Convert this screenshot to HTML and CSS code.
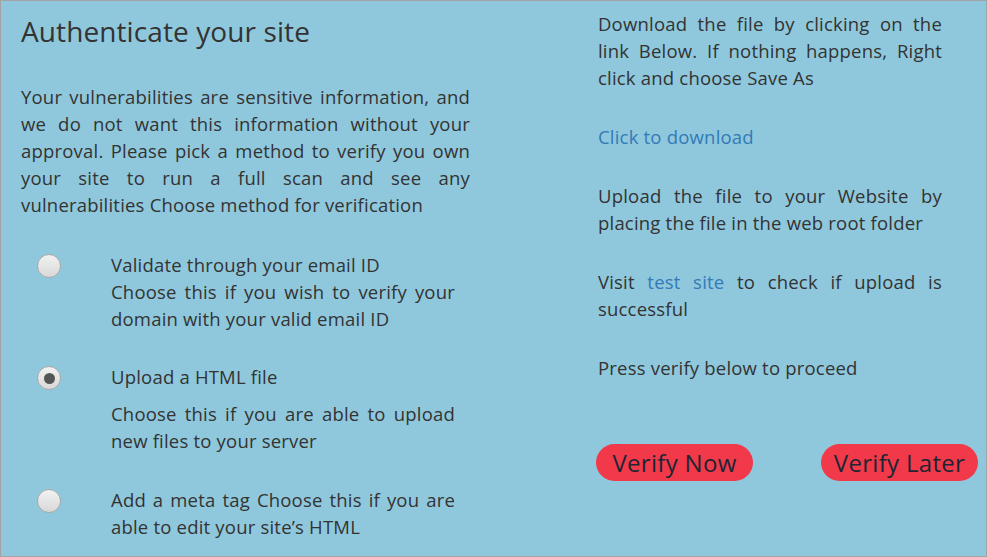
FILE: index.html
```html
<!DOCTYPE html>
<html lang="en">
<head>
    <meta charset="UTF-8">
    <meta name="viewport" content="width=device-width, initial-scale=1.0">
    <title>Authenticate your site</title>
    <link rel="stylesheet" href="styles.css">
</head>
<body>
    <div class="page">
        <div class="left">
            <h1>Authenticate your site</h1>
            <p class="intro">Your vulnerabilities are sensitive information, and we do not want this information without your approval. Please pick a method to verify you own your site to run a full scan and see any vulnerabilities Choose method for verification</p>

            <div class="option first">
                <span class="radio"></span>
                <div class="option-text">
                    <p>Validate through your email ID<br>Choose this if you wish to verify your domain with your valid email ID</p>
                </div>
            </div>

            <div class="option second">
                <span class="radio checked"></span>
                <div class="option-text">
                    <p>Upload a HTML file</p>
                    <p class="sub">Choose this if you are able to upload new files to your server</p>
                </div>
            </div>

            <div class="option">
                <span class="radio"></span>
                <div class="option-text">
                    <p>Add a meta tag Choose this if you are able to edit your site’s HTML</p>
                </div>
            </div>
        </div>

        <div class="right">
            <p>Download the file by clicking on the link Below. If nothing happens, Right click and choose Save As</p>
            <p><a href="#">Click to download</a></p>
            <p>Upload the file to your Website by placing the file in the web root folder</p>
            <p>Visit <a href="#">test site</a> to check if upload is successful</p>
            <p>Press verify below to proceed</p>
            <div class="buttons">
                <button type="button">Verify Now</button>
                <button type="button">Verify Later</button>
            </div>
        </div>
    </div>
</body>
</html>
```

FILE: styles.css
```css
* {
    margin: 0;
    padding: 0;
    box-sizing: border-box;
}

body {
    font-family: "Open Sans", "DejaVu Sans", sans-serif;
    font-size: 18.5px;
    letter-spacing: 0.2px;
    line-height: 27px;
    color: #333;
    background-color: #8fc8dc;
    border: 1px solid #a3a3a3;
    height: 100vh;
    overflow: hidden;
}

.page {
    display: flex;
}

p {
    text-align: justify;
}

a {
    color: #337ab7;
    text-decoration: none;
}

.left {
    width: 449px;
    margin-left: 20px;
    padding-top: 11px;
}

h1 {
    font-size: 28px;
    font-weight: normal;
    letter-spacing: 0.1px;
    line-height: 38px;
    color: #333;
}

.intro {
    margin-top: 33px;
}

.option {
    display: flex;
    margin-top: 32px;
}

.option.first {
    margin-top: 33px;
}

.option.second {
    margin-top: 31px;
}

.radio {
    flex: none;
    width: 24px;
    height: 24px;
    margin: 3px 50px 0 16px;
    border-radius: 50%;
    border: 1px solid #a9a9a9;
    background: linear-gradient(#f2f2f2, #d8d8d8);
    display: flex;
    justify-content: center;
    align-items: center;
}

.radio.checked::after {
    content: "";
    width: 11px;
    height: 11px;
    border-radius: 50%;
    background-color: #555;
}

.option-text {
    width: 344px;
}

.option-text .sub {
    margin-top: 10px;
}

.right {
    width: 344px;
    margin-left: 128px;
    padding-top: 9px;
}

.right p {
    margin-bottom: 32px;
}

.buttons {
    display: flex;
    gap: 68px;
    margin-left: -2px;
    margin-top: 63px;
}

button {
    flex: none;
    width: 157px;
    height: 37px;
    border: none;
    border-radius: 19px;
    background-color: #f1394a;
    color: #1c2533;
    font-family: "Open Sans", "DejaVu Sans", sans-serif;
    font-size: 24px;
    letter-spacing: 0.3px;
    cursor: pointer;
}
```
